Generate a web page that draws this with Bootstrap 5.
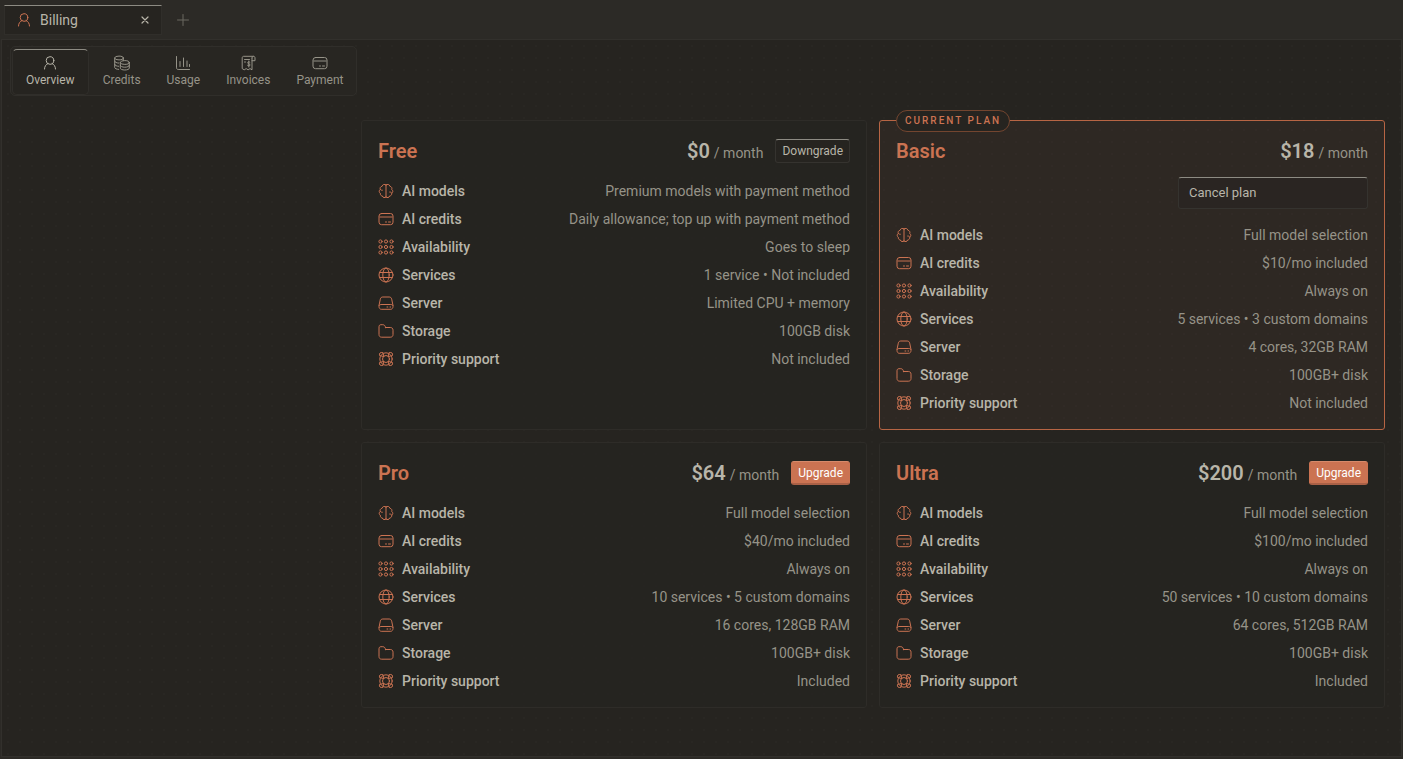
<!DOCTYPE html>
<html lang="en" data-bs-theme="dark">
<head>
<meta charset="utf-8">
<meta name="viewport" content="width=device-width, initial-scale=1">
<title>Billing</title>
<link href="https://cdn.jsdelivr.net/npm/bootstrap@5.3.0/dist/css/bootstrap.min.css" rel="stylesheet">
<style>
:root {
  --surface: #262420;
  --raised: #2c2a26;
  --line: #302e2a;
  --text: #b8b5a9;
  --muted: #969388;
  --accent: #cb7352;
}
body {
  font-family: Roboto, "Liberation Sans", sans-serif;
  font-size: 14px;
  line-height: 20px;
  color: var(--text);
  background: var(--raised);
}
.icon { width: 16px; height: 16px; flex: none; fill: none; stroke: currentColor; stroke-linecap: round; stroke-linejoin: round; }
.accent { color: var(--accent); }
.muted { color: var(--muted); }

/* Tab strip */
.tab-strip { height: 39px; padding: 5px 4px 4px; gap: 13px; }
.doc-tab { width: 158px; padding: 0 8px 0 11px; background: var(--surface); border: 1px solid var(--line); border-top-color: #8d8b83; }
.doc-tab a, .section-link { color: inherit; text-decoration: none; }
.plain-btn { border: 0; background: none; padding: 0; color: inherit; display: flex; }
.new-tab { color: #6b6860; }

/* Workspace with a dotted ground */
.workspace {
  margin: 0 1px 2px;
  border: 1px solid #32302c;
  background: radial-gradient(circle at 6px 6px, #292723 1px, transparent 1px) 0 0 / 12px 12px var(--surface);
}
.section-nav { margin: 6px 0 0 8px; padding: 2px 1px 0; gap: 2px; background: #282622; border: 1px solid var(--line); border-radius: 5px; }
.section-link { padding: 5px 11px; font-size: 12px; line-height: 18px; border: 1px solid transparent; border-radius: 5px; color: var(--muted); }
.section-link.active { padding: 5px 13px; color: var(--text); background: var(--surface); border-color: var(--line); border-top-color: #8d8b83; }

/* Plans */
.plans { padding: 80px 16px 48px 2px; }
.plan-grid { display: grid; grid-template-columns: repeat(2, minmax(0, 1fr)); gap: 12px; max-width: 1024px; }
.plan { position: relative; padding: 16px; border: 1px solid #2e2c28; border-radius: 3px; background: rgba(38, 36, 32, .8); }
.plan-current { border-color: #b76544; background: rgba(203, 105, 92, .055); }
.plan-flag {
  position: absolute; top: -11px; left: 16px; padding: 0 8px;
  font-size: 10px; line-height: 20px; font-weight: 500; letter-spacing: 2px; text-transform: uppercase;
  color: var(--accent); background: var(--surface); border: 1px solid #73452f; border-radius: 11px;
}
.plan-head { min-height: 28px; }
.plan-offer { gap: 12px; }
.plan-name, .price { font-size: 20px; line-height: 28px; font-weight: 600; margin: 0; }
.plan-btn { height: 24px; padding: 0 6px; font-size: 12px; line-height: 20px; border-radius: 3px; border: 1px solid #35332f; color: var(--text); }
.quiet-btn { background: var(--surface); border-top-color: #8d8b83; }
.quiet-btn:hover { background: var(--raised); }
.upgrade-btn { background: var(--accent); color: #fff; border-color: #d68a6b var(--accent) #a96046; border-bottom-width: 2px; }
.cancel-btn { width: 190px; height: 32px; padding: 0 10px; margin: 12px 0 0 auto; font-size: 13px; text-align: left; background: #2a2522; display: block; }
.features { display: grid; gap: 8px; margin: 16px 0 0; }
.features dt { font-weight: 500; }
.features dd { margin: 0; }
</style>
</head>
<body class="min-vh-100 d-flex flex-column">

<svg class="d-none" aria-hidden="true">
  <symbol id="i-user" viewBox="0 0 16 16"><circle cx="8" cy="5.500" r="3.800"/><path d="M2.500 14c0-2.600 1.500-4.700 3.500-5.500M13.500 14c0-2.600-1.500-4.700-3.500-5.500"/></symbol>
  <symbol id="i-coins" viewBox="0 0 16 16"><ellipse cx="5" cy="3" rx="4.300" ry="1.900"/><path d="M.7 3v9.500c0 1 1.800 1.800 4 1.900M9.300 3v2.500M.7 6.200c0 1 1.800 1.800 4 1.900M.7 9.400c0 1 1.800 1.800 4 1.900"/><ellipse cx="10.800" cy="7.500" rx="4.500" ry="1.900"/><path d="M6.300 7.500v5.600c0 1.100 2 1.900 4.500 1.900s4.500-.8 4.500-1.900V7.500M6.300 10.300c0 1.100 2 1.900 4.500 1.900s4.500-.8 4.500-1.900"/></symbol>
  <symbol id="i-chart" viewBox="0 0 16 16"><path d="M1.500 1.500v11.300c0 1 .7 1.700 1.700 1.700h11.300M5 6.500v5M8.500 3v8.500M12 6v5.500M14.500 9.500v2"/></symbol>
  <symbol id="i-invoice" viewBox="0 0 16 16"><path d="M12 3v11.800l-2-1.200-1.900 1.200-1.900-1.200-2 1.200-2-1.200V3c0-1 .5-1.700 1.500-1.700h9.600M12 5.700h3V3c0-1-.5-1.700-1.400-1.700S12 2 12 3M4.500 4.500h5M4.500 7h1"/><path d="M10 7.300c-.5-.7-2.400-.6-2.400.5 0 1.300 2.500.8 2.500 2.200 0 1.100-2 1.200-2.600.4M8.800 6v6"/></symbol>
  <symbol id="i-card" viewBox="0 0 16 16"><rect x="1" y="2.500" width="14" height="11.200" rx="2.500"/><path d="M1.500 6h13" stroke-width="1.800" stroke-linecap="butt" opacity=".55"/><path d="M7.500 11h1M10.500 11h2"/></symbol>
  <symbol id="i-brain" viewBox="0 0 16 16"><path d="M8 1.600v12.800M8 2C6.500.7 4.400 1.500 4.200 3.200 2.500 3.500 1.700 5 2.300 6.400.8 7.500.9 9.400 2.300 10.200c-.2 1.700.8 2.700 2 2.700.5 1.900 2.600 2.300 3.700 1M8 2c1.500-1.300 3.600-.5 3.800 1.200 1.700.3 2.500 1.800 1.900 3.200 1.500 1.100 1.400 3 0 3.800.2 1.700-.8 2.700-2 2.700-.5 1.900-2.600 2.300-3.700 1M2.300 6.400c.5.700 1.200 1 2 .9M13.700 9.900c-.5-.7-1.200-1-2-.9"/></symbol>
  <symbol id="i-grid" viewBox="0 0 16 16"><circle cx="2.500" cy="2.500" r="1.600"/><circle cx="8" cy="2.500" r="1.600"/><circle cx="13.500" cy="2.500" r="1.600"/><circle cx="2.500" cy="8" r="1.600"/><circle cx="8" cy="8" r="1.600"/><circle cx="13.500" cy="8" r="1.600"/><circle cx="2.500" cy="13.500" r="1.600"/><circle cx="8" cy="13.500" r="1.600"/><circle cx="13.500" cy="13.500" r="1.600"/></symbol>
  <symbol id="i-globe" viewBox="0 0 16 16"><circle cx="8" cy="8" r="7"/><ellipse cx="8" cy="8" rx="3.200" ry="7"/><path d="M1.700 5.500h12.600M1.700 10.500h12.600"/></symbol>
  <symbol id="i-server" viewBox="0 0 16 16"><path d="M1 10.500l1.300-6.300C2.700 2.600 3.500 2 4.800 2h6.400c1.300 0 2.100.6 2.500 2.200L15 10.500M3.200 9.500h9.600c1.300 0 2.200.7 2.200 2s-.8 2.800-2.200 2.800H3.200C1.800 14.300 1 12.800 1 11.500s.9-2 2.200-2zM9 12h.8M12 12h.6"/></symbol>
  <symbol id="i-folder" viewBox="0 0 16 16"><path d="M7.500 4.500h4.800c1.700 0 2.700 1 2.700 2.700v4.300c0 1.700-1 2.700-2.700 2.700H3.700C2 14.200 1 13.200 1 11.500V3.800C1 2.400 1.800 1.700 3 1.700h1.800c1.500 0 2.700 1.200 2.700 2.800z"/></symbol>
  <symbol id="i-support" viewBox="0 0 16 16"><circle cx="8" cy="8" r="6.200"/><circle cx="8" cy="8" r="3.500"/><path d="M5.500 5.500 1.600 4.600C.8 2.400 2.400.8 4.600 1.600zM10.500 5.500l3.900-.9c.8-2.200-.8-3.800-3-3zM5.500 10.500l-3.900.9c-.8 2.200.8 3.800 3 3zM10.500 10.500l3.900.9c.8 2.200-.8 3.800-3 3z"/></symbol>
  <symbol id="i-close" viewBox="0 0 16 16"><path d="m5 5 6 6M11 5l-6 6" stroke-width="1.200"/></symbol>
  <symbol id="i-plus" viewBox="0 0 16 16"><path d="M8 2.500v11M2.500 8h11"/></symbol>
</svg>

<header class="tab-strip d-flex align-items-stretch">
  <div class="doc-tab d-flex align-items-center justify-content-between">
    <a href="#" class="d-flex align-items-center gap-2"><svg class="icon accent"><use href="#i-user"/></svg>Billing</a>
    <button type="button" class="plain-btn" aria-label="Close tab"><svg class="icon"><use href="#i-close"/></svg></button>
  </div>
  <button type="button" class="plain-btn new-tab align-items-center" aria-label="New tab"><svg class="icon"><use href="#i-plus"/></svg></button>
</header>

<div class="workspace flex-grow-1 d-flex align-items-start">
  <nav class="section-nav d-flex flex-shrink-0" aria-label="Billing sections">
    <a href="#" class="section-link active d-flex flex-column align-items-center" aria-current="page"><svg class="icon"><use href="#i-user"/></svg>Overview</a>
    <a href="#" class="section-link d-flex flex-column align-items-center"><svg class="icon"><use href="#i-coins"/></svg>Credits</a>
    <a href="#" class="section-link d-flex flex-column align-items-center"><svg class="icon"><use href="#i-chart"/></svg>Usage</a>
    <a href="#" class="section-link d-flex flex-column align-items-center"><svg class="icon"><use href="#i-invoice"/></svg>Invoices</a>
    <a href="#" class="section-link d-flex flex-column align-items-center"><svg class="icon"><use href="#i-card"/></svg>Payment</a>
  </nav>

  <main class="plans flex-grow-1">
    <div class="plan-grid ms-auto">

      <section class="plan">
        <div class="plan-head d-flex align-items-center justify-content-between">
          <h2 class="plan-name accent">Free</h2>
          <div class="plan-offer d-flex align-items-center">
            <div class="d-flex align-items-baseline gap-1"><span class="price">$0</span><span class="muted">/ month</span></div>
            <button type="button" class="btn plan-btn quiet-btn">Downgrade</button>
          </div>
        </div>
        <dl class="features">
          <div class="d-flex justify-content-between"><dt class="d-flex align-items-center gap-2"><svg class="icon accent"><use href="#i-brain"/></svg>AI models</dt><dd class="muted">Premium models with payment method</dd></div>
          <div class="d-flex justify-content-between"><dt class="d-flex align-items-center gap-2"><svg class="icon accent"><use href="#i-card"/></svg>AI credits</dt><dd class="muted">Daily allowance; top up with payment method</dd></div>
          <div class="d-flex justify-content-between"><dt class="d-flex align-items-center gap-2"><svg class="icon accent"><use href="#i-grid"/></svg>Availability</dt><dd class="muted">Goes to sleep</dd></div>
          <div class="d-flex justify-content-between"><dt class="d-flex align-items-center gap-2"><svg class="icon accent"><use href="#i-globe"/></svg>Services</dt><dd class="muted">1 service • Not included</dd></div>
          <div class="d-flex justify-content-between"><dt class="d-flex align-items-center gap-2"><svg class="icon accent"><use href="#i-server"/></svg>Server</dt><dd class="muted">Limited CPU + memory</dd></div>
          <div class="d-flex justify-content-between"><dt class="d-flex align-items-center gap-2"><svg class="icon accent"><use href="#i-folder"/></svg>Storage</dt><dd class="muted">100GB disk</dd></div>
          <div class="d-flex justify-content-between"><dt class="d-flex align-items-center gap-2"><svg class="icon accent"><use href="#i-support"/></svg>Priority support</dt><dd class="muted">Not included</dd></div>
        </dl>
      </section>

      <section class="plan plan-current">
        <span class="plan-flag">Current plan</span>
        <div class="plan-head d-flex align-items-center justify-content-between">
          <h2 class="plan-name accent">Basic</h2>
          <div class="d-flex align-items-baseline gap-1"><span class="price">$18</span><span class="muted">/ month</span></div>
        </div>
        <button type="button" class="btn plan-btn quiet-btn cancel-btn">Cancel plan</button>
        <dl class="features">
          <div class="d-flex justify-content-between"><dt class="d-flex align-items-center gap-2"><svg class="icon accent"><use href="#i-brain"/></svg>AI models</dt><dd class="muted">Full model selection</dd></div>
          <div class="d-flex justify-content-between"><dt class="d-flex align-items-center gap-2"><svg class="icon accent"><use href="#i-card"/></svg>AI credits</dt><dd class="muted">$10/mo included</dd></div>
          <div class="d-flex justify-content-between"><dt class="d-flex align-items-center gap-2"><svg class="icon accent"><use href="#i-grid"/></svg>Availability</dt><dd class="muted">Always on</dd></div>
          <div class="d-flex justify-content-between"><dt class="d-flex align-items-center gap-2"><svg class="icon accent"><use href="#i-globe"/></svg>Services</dt><dd class="muted">5 services • 3 custom domains</dd></div>
          <div class="d-flex justify-content-between"><dt class="d-flex align-items-center gap-2"><svg class="icon accent"><use href="#i-server"/></svg>Server</dt><dd class="muted">4 cores, 32GB RAM</dd></div>
          <div class="d-flex justify-content-between"><dt class="d-flex align-items-center gap-2"><svg class="icon accent"><use href="#i-folder"/></svg>Storage</dt><dd class="muted">100GB+ disk</dd></div>
          <div class="d-flex justify-content-between"><dt class="d-flex align-items-center gap-2"><svg class="icon accent"><use href="#i-support"/></svg>Priority support</dt><dd class="muted">Not included</dd></div>
        </dl>
      </section>

      <section class="plan">
        <div class="plan-head d-flex align-items-center justify-content-between">
          <h2 class="plan-name accent">Pro</h2>
          <div class="plan-offer d-flex align-items-center">
            <div class="d-flex align-items-baseline gap-1"><span class="price">$64</span><span class="muted">/ month</span></div>
            <button type="button" class="btn plan-btn upgrade-btn">Upgrade</button>
          </div>
        </div>
        <dl class="features">
          <div class="d-flex justify-content-between"><dt class="d-flex align-items-center gap-2"><svg class="icon accent"><use href="#i-brain"/></svg>AI models</dt><dd class="muted">Full model selection</dd></div>
          <div class="d-flex justify-content-between"><dt class="d-flex align-items-center gap-2"><svg class="icon accent"><use href="#i-card"/></svg>AI credits</dt><dd class="muted">$40/mo included</dd></div>
          <div class="d-flex justify-content-between"><dt class="d-flex align-items-center gap-2"><svg class="icon accent"><use href="#i-grid"/></svg>Availability</dt><dd class="muted">Always on</dd></div>
          <div class="d-flex justify-content-between"><dt class="d-flex align-items-center gap-2"><svg class="icon accent"><use href="#i-globe"/></svg>Services</dt><dd class="muted">10 services • 5 custom domains</dd></div>
          <div class="d-flex justify-content-between"><dt class="d-flex align-items-center gap-2"><svg class="icon accent"><use href="#i-server"/></svg>Server</dt><dd class="muted">16 cores, 128GB RAM</dd></div>
          <div class="d-flex justify-content-between"><dt class="d-flex align-items-center gap-2"><svg class="icon accent"><use href="#i-folder"/></svg>Storage</dt><dd class="muted">100GB+ disk</dd></div>
          <div class="d-flex justify-content-between"><dt class="d-flex align-items-center gap-2"><svg class="icon accent"><use href="#i-support"/></svg>Priority support</dt><dd class="muted">Included</dd></div>
        </dl>
      </section>

      <section class="plan">
        <div class="plan-head d-flex align-items-center justify-content-between">
          <h2 class="plan-name accent">Ultra</h2>
          <div class="plan-offer d-flex align-items-center">
            <div class="d-flex align-items-baseline gap-1"><span class="price">$200</span><span class="muted">/ month</span></div>
            <button type="button" class="btn plan-btn upgrade-btn">Upgrade</button>
          </div>
        </div>
        <dl class="features">
          <div class="d-flex justify-content-between"><dt class="d-flex align-items-center gap-2"><svg class="icon accent"><use href="#i-brain"/></svg>AI models</dt><dd class="muted">Full model selection</dd></div>
          <div class="d-flex justify-content-between"><dt class="d-flex align-items-center gap-2"><svg class="icon accent"><use href="#i-card"/></svg>AI credits</dt><dd class="muted">$100/mo included</dd></div>
          <div class="d-flex justify-content-between"><dt class="d-flex align-items-center gap-2"><svg class="icon accent"><use href="#i-grid"/></svg>Availability</dt><dd class="muted">Always on</dd></div>
          <div class="d-flex justify-content-between"><dt class="d-flex align-items-center gap-2"><svg class="icon accent"><use href="#i-globe"/></svg>Services</dt><dd class="muted">50 services • 10 custom domains</dd></div>
          <div class="d-flex justify-content-between"><dt class="d-flex align-items-center gap-2"><svg class="icon accent"><use href="#i-server"/></svg>Server</dt><dd class="muted">64 cores, 512GB RAM</dd></div>
          <div class="d-flex justify-content-between"><dt class="d-flex align-items-center gap-2"><svg class="icon accent"><use href="#i-folder"/></svg>Storage</dt><dd class="muted">100GB+ disk</dd></div>
          <div class="d-flex justify-content-between"><dt class="d-flex align-items-center gap-2"><svg class="icon accent"><use href="#i-support"/></svg>Priority support</dt><dd class="muted">Included</dd></div>
        </dl>
      </section>

    </div>
  </main>
</div>

<script src="https://cdn.jsdelivr.net/npm/bootstrap@5.3.0/dist/js/bootstrap.bundle.min.js"></script>
</body>
</html>
